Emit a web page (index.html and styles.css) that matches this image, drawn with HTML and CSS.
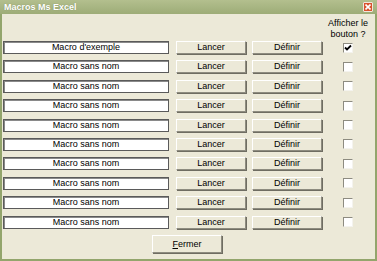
FILE: index.html
```html
<!DOCTYPE html>
<html lang="fr">
<head>
    <meta charset="UTF-8">
    <title>Macros Ms Excel</title>
    <link rel="stylesheet" href="styles.css">
</head>
<body>

<div class="window">
    <div class="title-bar">
        <span class="title">Macros Ms Excel</span>
        <span class="close-btn">
            <svg width="6" height="6" viewBox="0 0 6 6"><path d="M0.5 0.5 L5.5 5.5 M5.5 0.5 L0.5 5.5" stroke="#fff" stroke-width="1.6"/></svg>
        </span>
    </div>

    <div class="content">
        <div class="header">
            <div class="header-label">Afficher le<br>bouton ?</div>
        </div>

        <div class="rows">
            <div class="row">
                <div class="name-box">Macro d'exemple</div>
                <button class="btn run-btn">Lancer</button>
                <button class="btn def-btn">Définir</button>
                <div class="check-cell"><span class="checkbox checked">
                    <svg width="8" height="8" viewBox="0 0 8 8"><path d="M1 3.5 L3 5.5 L7 1.5" stroke="#000" stroke-width="1.8" fill="none"/></svg>
                </span></div>
            </div>
            <div class="row">
                <div class="name-box">Macro sans nom</div>
                <button class="btn run-btn">Lancer</button>
                <button class="btn def-btn">Définir</button>
                <div class="check-cell"><span class="checkbox"></span></div>
            </div>
            <div class="row">
                <div class="name-box">Macro sans nom</div>
                <button class="btn run-btn">Lancer</button>
                <button class="btn def-btn">Définir</button>
                <div class="check-cell"><span class="checkbox"></span></div>
            </div>
            <div class="row">
                <div class="name-box">Macro sans nom</div>
                <button class="btn run-btn">Lancer</button>
                <button class="btn def-btn">Définir</button>
                <div class="check-cell"><span class="checkbox"></span></div>
            </div>
            <div class="row">
                <div class="name-box">Macro sans nom</div>
                <button class="btn run-btn">Lancer</button>
                <button class="btn def-btn">Définir</button>
                <div class="check-cell"><span class="checkbox"></span></div>
            </div>
            <div class="row">
                <div class="name-box">Macro sans nom</div>
                <button class="btn run-btn">Lancer</button>
                <button class="btn def-btn">Définir</button>
                <div class="check-cell"><span class="checkbox"></span></div>
            </div>
            <div class="row">
                <div class="name-box">Macro sans nom</div>
                <button class="btn run-btn">Lancer</button>
                <button class="btn def-btn">Définir</button>
                <div class="check-cell"><span class="checkbox"></span></div>
            </div>
            <div class="row">
                <div class="name-box">Macro sans nom</div>
                <button class="btn run-btn">Lancer</button>
                <button class="btn def-btn">Définir</button>
                <div class="check-cell"><span class="checkbox"></span></div>
            </div>
            <div class="row">
                <div class="name-box">Macro sans nom</div>
                <button class="btn run-btn">Lancer</button>
                <button class="btn def-btn">Définir</button>
                <div class="check-cell"><span class="checkbox"></span></div>
            </div>
            <div class="row">
                <div class="name-box">Macro sans nom</div>
                <button class="btn run-btn">Lancer</button>
                <button class="btn def-btn">Définir</button>
                <div class="check-cell"><span class="checkbox"></span></div>
            </div>
        </div>

        <div class="footer">
            <button class="btn close-dialog-btn"><u>F</u>ermer</button>
        </div>
    </div>
</div>

</body>
</html>
```

FILE: styles.css
```css
body {
    margin: 0;
    font-family: "Liberation Sans", Arial, sans-serif;
    font-size: 9px;
    background-color: #ece9d8;
}
.window {
    width: 377px;
    height: 261px;
    box-sizing: border-box;
    border: 2px solid #93a56c;
    border-top: none;
    background-color: #ece9d8;
}
.title-bar {
    height: 14px;
    margin: 0 -2px;
    background: linear-gradient(#b3bf8e, #9dac77);
    display: flex;
    align-items: center;
    justify-content: space-between;
    padding: 0 4px 0 4px;
}
.title {
    color: #fff;
    font-weight: bold;
    font-size: 9px;
    text-shadow: 0 0 1px #7c8a58;
}
.close-btn {
    width: 8px;
    height: 8px;
    background: #d9532d;
    border: 1px solid #f2e6dc;
    border-radius: 1px;
    display: flex;
    align-items: center;
    justify-content: center;
}
.content {
    padding: 0 0 0 1px;
}
.header {
    display: flex;
    justify-content: flex-end;
    padding-top: 4px;
}
.header-label {
    width: 48px;
    margin-right: 3px;
    text-align: center;
    line-height: 11px;
    color: #000;
}
.rows {
    display: flex;
    flex-direction: column;
    gap: 6.4px;
    margin-top: 1px;
}
.row {
    display: flex;
    align-items: center;
    height: 13px;
}
.name-box {
    width: 166px;
    height: 13px;
    box-sizing: border-box;
    background: #fff;
    border: 1px solid #5a5a5a;
    box-shadow: inset 1px 1px 0 #8a8a8a;
    text-align: center;
    line-height: 11px;
    color: #000;
}
.btn {
    font-family: "Liberation Sans", Arial, sans-serif;
    font-size: 9px;
    color: #000;
    background: #ece9d8;
    border: none;
    border-top: 1px solid #fff;
    border-left: 1px solid #fff;
    border-right: 1px solid #8e8c80;
    border-bottom: 1px solid #8e8c80;
    box-shadow: 1px 1px 0 #6f6d62;
    padding: 0;
    margin: 0;
}
.run-btn, .def-btn {
    width: 70px;
    height: 13px;
    line-height: 11px;
}
.run-btn {
    margin-left: 7px;
}
.def-btn {
    margin-left: 6px;
}
.check-cell {
    flex: 1;
    display: flex;
    justify-content: flex-start;
    padding-left: 21px;
}
.checkbox {
    width: 10px;
    height: 10px;
    box-sizing: border-box;
    background: #fff;
    border-top: 1px solid #8d8b80;
    border-left: 1px solid #8d8b80;
    border-right: 1px solid #f4f3ee;
    border-bottom: 1px solid #f4f3ee;
    display: flex;
    align-items: center;
    justify-content: center;
}
.footer {
    display: flex;
    justify-content: center;
    padding-top: 6px;
    padding-right: 4px;
}
.close-dialog-btn {
    width: 70px;
    height: 18px;
}
```
